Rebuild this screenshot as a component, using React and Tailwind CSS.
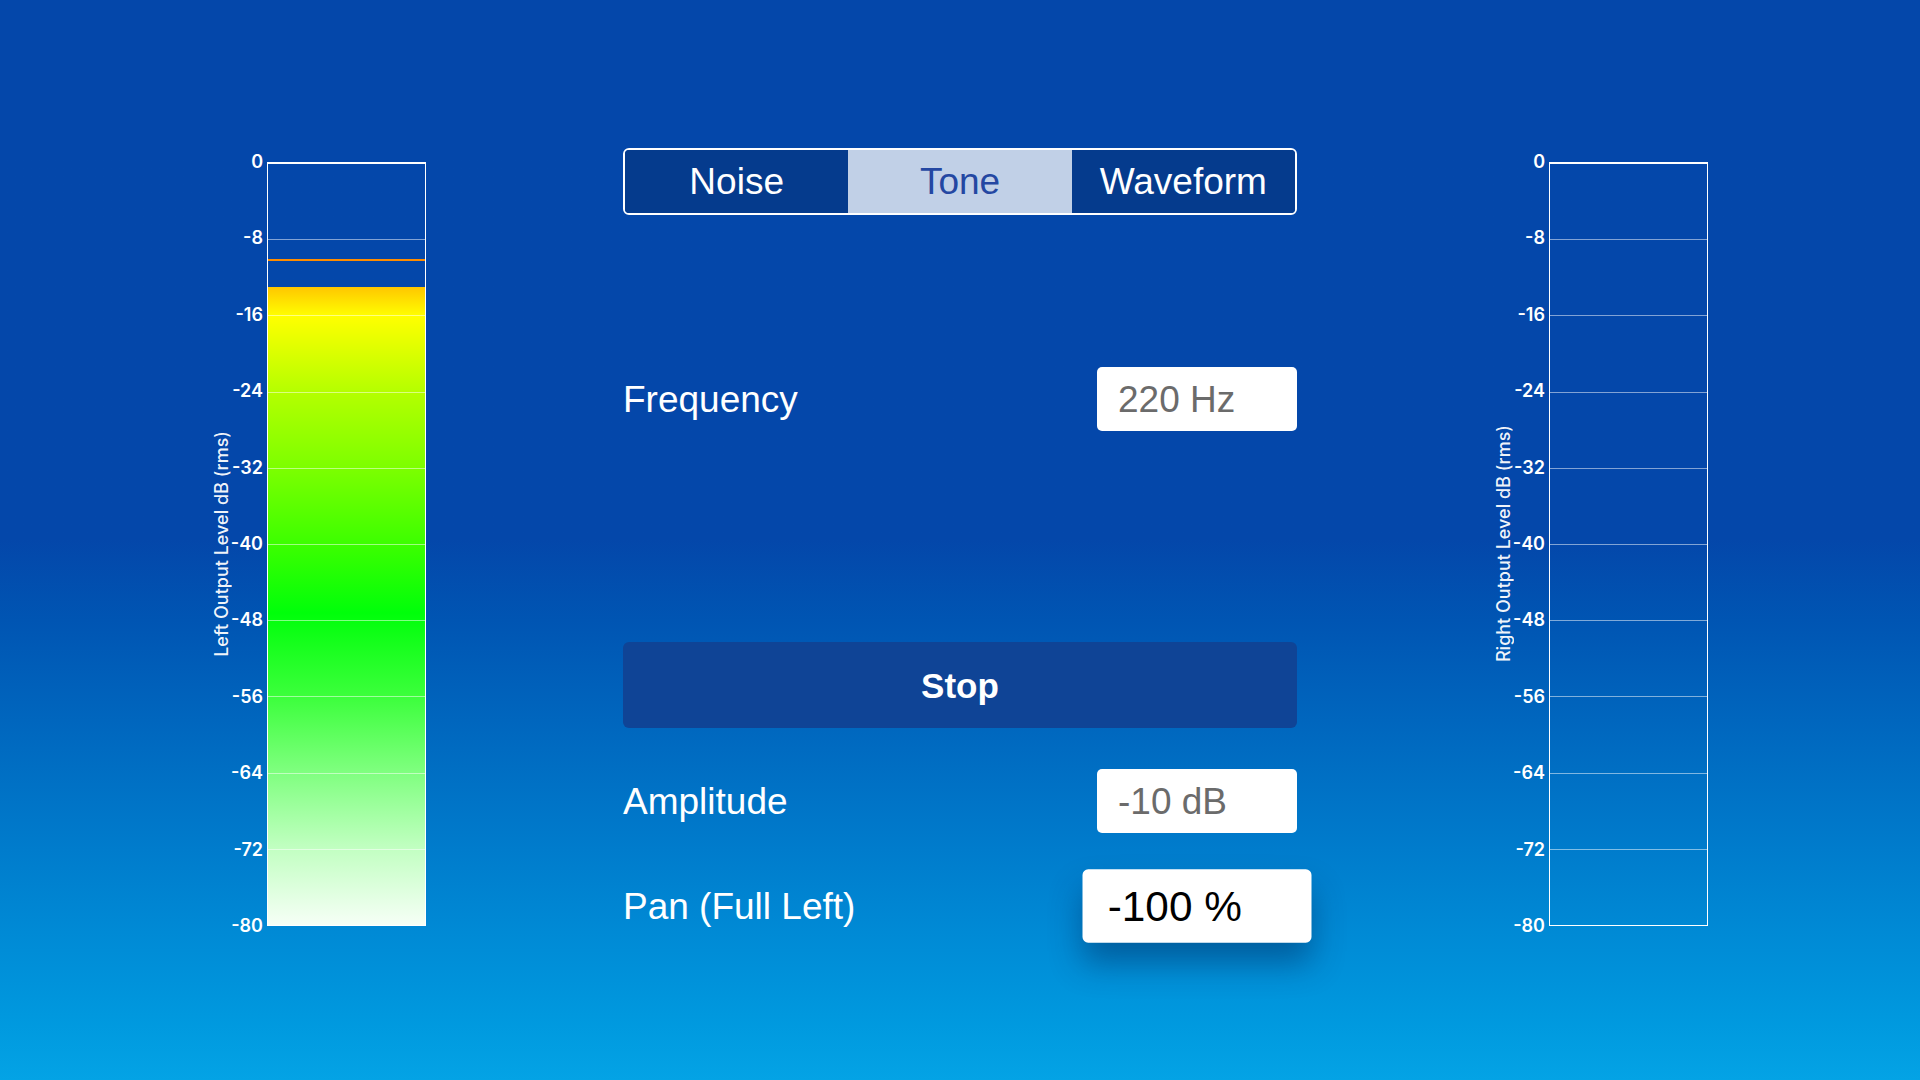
import React from 'react'

const TICKS = [0, -8, -16, -24, -32, -40, -48, -56, -64, -72, -80]

// level in dB -> share of the meter height
const toShare = (db) => Math.max(0, Math.min(1, (db + 80) / 80))

const LevelMeter = ({ title, level, peak }) => {
  return (
    <div className="flex w-[214px] items-center mt-[14px]">
      <div className="w-5 self-center flex justify-center">
        <span className="[writing-mode:vertical-rl] rotate-180 whitespace-nowrap text-[18px] leading-5 font-medium text-white/95 [font-family:Inter,sans-serif]">
          {title}
        </span>
      </div>

      <div className="w-[31px] h-[786px] -my-[11px] flex flex-col justify-between items-end text-[18px] leading-[22px] font-semibold text-white [font-family:Inter,sans-serif]">
        {TICKS.map((t) => (
          <span key={t}>{t}</span>
        ))}
      </div>

      <div className="relative ml-1 w-[159px] h-[764px] border border-t-2 border-white">
        {level !== undefined && (
          <div
            className="absolute bottom-0 left-0 right-0 overflow-hidden"
            style={{ height: `${toShare(level) * 100}%` }}
          >
            <div className="absolute bottom-0 left-0 right-0 h-[761px] bg-[linear-gradient(to_bottom,#ff6a00_0%,#ffc400_16%,#ffff00_20%,#b4ff00_30%,#7cff00_40%,#3cff00_50%,#00ff0a_59%,#3cff3c_70%,#80ff80_80%,#c2ffc2_90%,#f6fff6_100%)]" />
          </div>
        )}

        <div className="absolute inset-0 flex flex-col">
          {TICKS.slice(1).map((t, i) => (
            <div key={t} className={i < 9 ? 'flex-1 border-b border-white/50' : 'flex-1'} />
          ))}
        </div>

        {peak !== undefined && (
          <div
            className="absolute left-0 right-0 h-[2px] bg-[#ff8c00]"
            style={{ top: `${(1 - toShare(peak)) * 100}%` }}
          />
        )}
      </div>
    </div>
  )
}

const SegmentedControl = ({ options, selected }) => (
  <div className="flex h-[67px] rounded-md border-2 border-white overflow-hidden">
    {options.map((opt) => (
      <div
        key={opt}
        className={
          opt === selected
            ? 'flex-1 flex items-center justify-center bg-[#c1d0e7] text-[#2447a2]'
            : 'flex-1 flex items-center justify-center bg-[#053b8d] text-white'
        }
      >
        {opt}
      </div>
    ))}
  </div>
)

const ValueRow = ({ label, value, focused }) => (
  <div className="flex h-[64px] items-center justify-between">
    <span className="text-white">{label}</span>
    {focused ? (
      <div className="w-[200px] h-[64px] flex items-center pl-[22px] rounded-[5px] bg-white text-black scale-[1.145] shadow-[0_18px_28px_rgba(0,40,90,0.45)]">
        {value}
      </div>
    ) : (
      <div className="w-[200px] h-[64px] flex items-center pl-[21px] rounded-[5px] bg-white text-[#6b6b6b]">
        {value}
      </div>
    )}
  </div>
)

export default function App() {
  return (
    <div className="min-h-screen w-full bg-linear-to-b from-[#0447aa] from-50% to-[#04a3e5] [font-family:'Liberation_Sans',Arial,sans-serif]">
      <div className="flex justify-center items-start gap-[197px] pt-[148px] h-[1080px]">
        <LevelMeter title="Left Output Level dB (rms)" level={-12.9} peak={-10} />

        <div className="w-[674px] flex flex-col text-[37px] leading-none">
          <SegmentedControl options={['Noise', 'Tone', 'Waveform']} selected="Tone" />

          <div className="mt-[152px]">
            <ValueRow label="Frequency" value="220 Hz" />
          </div>

          <button className="mt-[211px] h-[86px] rounded-md bg-[#0f4496] text-white text-[35px] font-bold">
            Stop
          </button>

          <div className="mt-[41px]">
            <ValueRow label="Amplitude" value="-10 dB" />
          </div>

          <div className="mt-[41px]">
            <ValueRow label="Pan (Full Left)" value="-100 %" focused />
          </div>
        </div>

        <LevelMeter title="Right Output Level dB (rms)" />
      </div>
    </div>
  )
}
